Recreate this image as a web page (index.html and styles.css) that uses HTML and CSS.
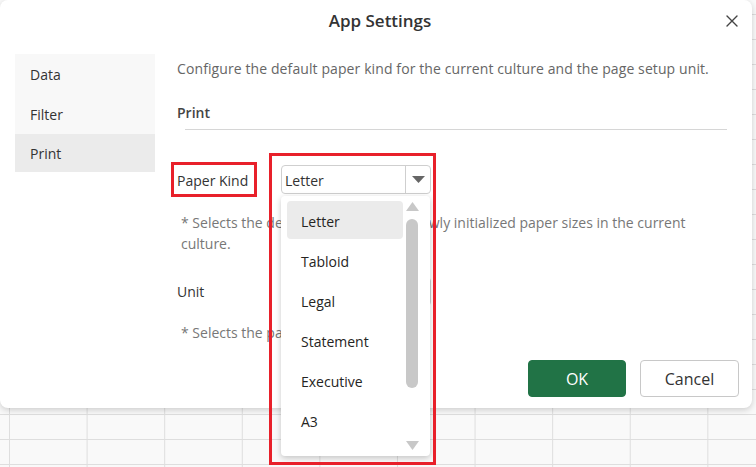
FILE: index.html
```html
<!DOCTYPE html>
<html lang="en">
<head>
<meta charset="utf-8">
<title>App Settings</title>
<link rel="stylesheet" href="styles.css">
</head>
<body>
<div class="dialog">
  <header class="header">
    <span></span>
    <h1 class="title">App Settings</h1>
    <button class="close" aria-label="Close">
      <svg width="12" height="12" viewBox="0 0 12 12"><path d="M1 1 L11 11 M11 1 L1 11" stroke="#444" stroke-width="1.4" fill="none" stroke-linecap="round"/></svg>
    </button>
  </header>
  <div class="main">
    <nav class="sidebar">
      <div class="nav-item">Data</div>
      <div class="nav-item">Filter</div>
      <div class="nav-item active">Print</div>
    </nav>
    <section class="content">
      <p class="desc">Configure the default paper kind for the current culture and the page setup unit.</p>
      <div class="section-title">Print</div>
      <div class="divider"></div>

      <div class="field-row first">
        <div class="label-cell"><span class="label label-marked">Paper Kind</span></div>
        <div class="select-wrap">
          <div class="select">
            <span class="select-value">Letter</span>
            <span class="select-btn"><svg width="13" height="7" viewBox="0 0 13 7"><path d="M0 0 H13 L6.5 7 Z" fill="#666"/></svg></span>
          </div>
          <div class="popup">
            <ul class="options">
              <li class="option selected">Letter</li>
              <li class="option">Tabloid</li>
              <li class="option">Legal</li>
              <li class="option">Statement</li>
              <li class="option">Executive</li>
              <li class="option">A3</li>
              <li class="option">A4</li>
            </ul>
            <div class="scrollbar">
              <svg class="sb-arrow" width="13" height="9" viewBox="0 0 13 9"><path d="M6.5 0 L13 9 H0 Z" fill="#c8c8c8"/></svg>
              <div class="sb-thumb"></div>
              <svg class="sb-arrow down" width="13" height="9" viewBox="0 0 13 9"><path d="M0 0 H13 L6.5 9 Z" fill="#c8c8c8"/></svg>
            </div>
          </div>
          <div class="annot-box"></div>
        </div>
      </div>
      <p class="hint">* Selects the default paper kind for newly initialized paper sizes in the current culture.</p>

      <div class="field-row second">
        <div class="label-cell"><span class="label">Unit</span></div>
        <div class="select-wrap">
          <div class="select">
            <span class="select-value">Inch</span>
            <span class="select-btn"><svg width="13" height="7" viewBox="0 0 13 7"><path d="M0 0 H13 L6.5 7 Z" fill="#666"/></svg></span>
          </div>
        </div>
      </div>
      <p class="hint hint-2">* Selects the page setup unit.</p>
    </section>
  </div>
  <footer class="footer">
    <button class="btn btn-primary">OK</button>
    <button class="btn btn-secondary">Cancel</button>
  </footer>
</div>
</body>
</html>
```

FILE: styles.css
```css
* { box-sizing: border-box; }

html, body {
  margin: 0;
  padding: 0;
}

body {
  width: 756px;
  height: 467px;
  overflow: hidden;
  background-color: #f9f9f9;
  background-image:
    linear-gradient(#dedede 1px, transparent 1px),
    linear-gradient(90deg, #dedede 1px, transparent 1px);
  background-size: 77.6px 25px;
  background-position: 9px 14px;
  font-family: "Open Sans", "Noto Sans", "Liberation Sans", sans-serif;
  font-size: 14px;
  color: #333;
}

.dialog {
  width: 752px;
  height: 408px;
  background: #fff;
  border-radius: 8px;
  box-shadow: 0 2px 6px rgba(0, 0, 0, 0.18);
  display: flex;
  flex-direction: column;
}

.header {
  height: 42px;
  display: grid;
  grid-template-columns: 1fr auto 1fr;
  align-items: center;
  padding-left: 8px;
}

.title {
  margin: 0;
  font-size: 17px;
  font-weight: 600;
  color: #333;
  line-height: 42px;
}

.close {
  justify-self: end;
  margin-right: 13px;
  width: 14px;
  height: 14px;
  padding: 1px;
  border: 0;
  background: none;
  display: flex;
}

.main {
  display: flex;
  padding: 12px 0 0 15px;
}

.sidebar {
  width: 140px;
  background: #f8f8f8;
  align-self: flex-start;
}

.nav-item {
  height: 40px;
  line-height: 41px;
  padding-left: 15px;
  color: #333;
}

.nav-item.active {
  height: 38px;
  line-height: 40px;
  background: #ebebeb;
}

.content {
  flex: 1;
  padding: 5px 25px 0 22px;
}

.desc {
  margin: 0;
  line-height: 20px;
  color: #666;
  letter-spacing: 0.1px;
}

.section-title {
  margin-top: 24px;
  line-height: 20px;
  font-weight: 600;
  color: #444;
}

.divider {
  margin: 6px 0 0 8px;
  height: 1px;
  background: #d6d6d6;
}

.field-row {
  display: grid;
  grid-template-columns: 104px 150px;
  align-items: center;
}

.field-row.first {
  margin-top: 32px;
  height: 35px;
}

.field-row.second {
  margin-top: 23px;
  height: 29px;
}

.label-cell {
  display: flex;
  align-items: center;
}

.label {
  color: #333;
  line-height: 20px;
}

.label-marked {
  margin-left: -6px;
  width: 86px;
  height: 35px;
  line-height: 31px;
  padding-left: 3px;
  border: 3px solid #e8202a;
}

.select-wrap {
  position: relative;
}

.select {
  height: 29px;
  border: 1px solid #cfcfcf;
  border-radius: 4px;
  background: #fff;
  display: flex;
  align-items: stretch;
}

.select-value {
  flex: 1;
  padding-left: 3px;
  line-height: 29px;
  color: #333;
}

.select-btn {
  width: 25px;
  border-left: 1px solid #cfcfcf;
  display: flex;
  align-items: center;
  justify-content: center;
}

.popup {
  position: absolute;
  top: 31px;
  left: 0;
  width: 149px;
  height: 260px;
  background: #fff;
  border-radius: 4px;
  box-shadow: 0 2px 6px rgba(0, 0, 0, 0.22);
  overflow: hidden;
  z-index: 5;
  display: flex;
}

.options {
  list-style: none;
  margin: 0;
  padding: 5px 0 0 6px;
  width: 122px;
}

.option {
  height: 38px;
  line-height: 42px;
  margin-bottom: 2px;
  padding-left: 14px;
  border-radius: 4px;
  color: #252423;
}

.option.selected {
  background: #ebebeb;
}

.scrollbar {
  width: 27px;
  padding-top: 6px;
  display: flex;
  flex-direction: column;
  align-items: center;
}

.sb-arrow {
  display: block;
  margin-right: 9px;
}

.sb-thumb {
  width: 12px;
  height: 169px;
  margin: 8px 9px 0 0;
  border-radius: 6px;
  background: #c8c8c8;
}

.sb-arrow.down {
  margin-top: 53px;
}

.annot-box {
  position: absolute;
  left: -12px;
  top: -12px;
  width: 167px;
  height: 312px;
  border: 3px solid #e8202a;
  z-index: 6;
  pointer-events: none;
}

.hint {
  margin: 15px 0 0;
  padding-left: 4px;
  line-height: 21px;
  color: #777;
}

.hint-2 {
  margin-top: 16px;
}

.footer {
  margin-top: auto;
  display: flex;
  justify-content: flex-end;
  gap: 14px;
  padding: 0 13px 11px 0;
}

.btn {
  height: 37px;
  border-radius: 4px;
  font-family: inherit;
  font-size: 16px;
  cursor: pointer;
}

.btn-primary {
  width: 98px;
  background: #217346;
  border: 1px solid #217346;
  color: #fff;
}

.btn-secondary {
  width: 99px;
  background: #fff;
  border: 1px solid #c8c8c8;
  color: #333;
}
```
